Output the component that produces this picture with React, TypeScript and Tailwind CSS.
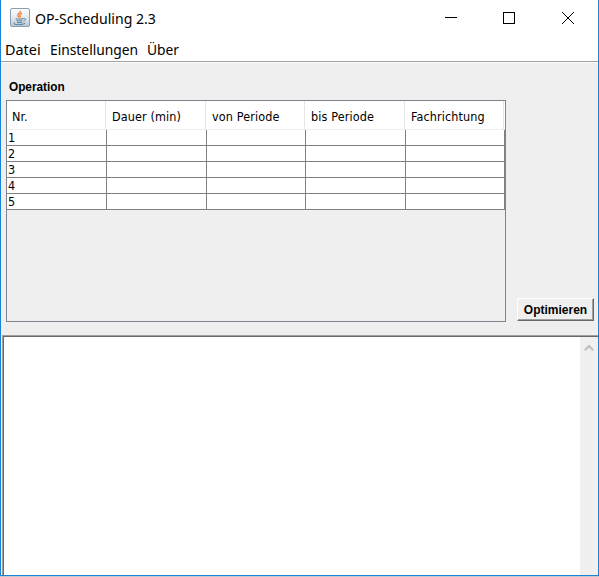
const columns = [
  { label: 'Nr.', head: 'w-[99px]', cell: 'w-[100px]', pad: 'pl-[5px]' },
  { label: 'Dauer (min)', head: 'w-[100px]', cell: 'w-[100px]', pad: 'pl-[6px]' },
  { label: 'von Periode', head: 'w-[99px]', cell: 'w-[99px]', pad: 'pl-[6px]' },
  { label: 'bis Periode', head: 'w-[100px]', cell: 'w-[100px]', pad: 'pl-[6px]' },
  { label: 'Fachrichtung', head: 'w-[99px]', cell: 'w-[99px]', pad: 'pl-[6px]' },
];

function JavaIcon() {
  return (
    <svg width="20" height="20" viewBox="0 0 20 20" fill="none">
      <defs>
        <linearGradient id="tile" x1="0" y1="0" x2="0" y2="1">
          <stop offset="0" stopColor="#fafbfc" />
          <stop offset="0.5" stopColor="#e5eaef" />
          <stop offset="1" stopColor="#b8c5d0" />
        </linearGradient>
      </defs>
      <rect x="0.5" y="0.5" width="19" height="18" rx="1.5" fill="url(#tile)" stroke="#8b9daf" />
      <path d="M10.4 2.8c.8 2-3.2 3-2.6 4.7.2.7 1 1.3 1.5 2M12 5.2c-1.5.7-2.9 1.6-2 2.5.5.7.5 1.3-.2 1.9" stroke="#ed8134" strokeWidth="1.3" />
      <path d="M5.8 10.6c-.6.5 5.3.8 7.6 0M6.5 12.5c1.5.7 4 .7 5.9.1M7 14.3c1.3.5 3.5.5 5 0M13.4 10.6c3-.5 2.6 1.7.1 2.5M4.8 14.8c-3.9 1.7 5.5 2.8 10.2.6" stroke="#4f7c9f" strokeWidth="1" />
    </svg>
  );
}

function TitleBar() {
  return (
    <header className="flex h-9 items-center bg-white pl-[9px]">
      <JavaIcon />
      <h1 className="ml-[5px] h-[22px] w-[121px] origin-left scale-x-[0.94] whitespace-nowrap text-[15px] leading-[22px]">OP-Scheduling 2.3</h1>
      <svg className="ml-auto mr-[23px]" width="130" height="14" fill="none" stroke="black" shapeRendering="crispEdges">
        <path d="M0 6.5h12" />
        <rect x="58.5" y="1.5" width="11" height="11" />
        <path d="M117 1l12 12M129 1l-12 12" shapeRendering="auto" />
      </svg>
    </header>
  );
}

function OperationTable() {
  return (
    <div className="h-[222px] w-[500px] border border-[#7f838d]">
      <div className="flex h-[29px] border-b border-[#eeeeee] bg-white">
        {columns.map((c) => (
          <div key={c.label} className={`${c.head} ${c.pad} shrink-0 border-r border-[#e5e5e5] text-[12.5px] leading-[32px] tracking-[0.12px] whitespace-nowrap`}>{c.label}</div>
        ))}
      </div>
      {[1, 2, 3, 4, 5].map((n) => (
        <div key={n} className="flex h-4 border-b border-[#808080] bg-white">
          {columns.map((c, i) => (
            <div key={c.label} className={`${c.cell} shrink-0 border-r border-[#808080] pl-px text-[12.5px] leading-[15px]`}>{i === 0 ? n : ''}</div>
          ))}
        </div>
      ))}
    </div>
  );
}

export default function App() {
  return (
    <div className="h-[577px] w-[599px] overflow-hidden border-b border-[#c5c8cb] bg-[#efefef] font-['Noto_Sans',sans-serif] text-black">
      <div className="flex h-[576px] flex-col border-x border-b border-[#1883d7]">
        <TitleBar />
        <nav className="flex h-[26px] shrink-0 gap-[9px] border-b border-[#a0a0a0] bg-white pl-1 text-[15px] leading-[27px]">
          <span className="w-9 origin-left scale-x-[0.96]">Datei</span>
          <span className="w-[88px] origin-left scale-x-[0.92]">Einstellungen</span>
          <span className="w-8 origin-left scale-x-[0.92]">Über</span>
        </nav>
        <main className="flex h-[273px] shrink-0 flex-col border-t border-white pl-[5px] pr-1 font-['DejaVu_Sans_Condensed','DejaVu_Sans',sans-serif]">
          <h2 className="h-[37px] origin-left scale-x-[0.985] pl-[3px] pt-[16px] font-['Liberation_Sans',sans-serif] text-[12px] font-bold leading-[16px]">Operation</h2>
          <div className="flex items-end justify-between">
            <OperationTable />
            <button className="mb-px h-[23px] w-[77px] border border-b-[#696969] border-l-white border-r-[#696969] border-t-white font-['Liberation_Sans',sans-serif] text-[12px] font-bold">
              <span className="block h-full whitespace-nowrap border-b border-r border-[#a0a0a0] pl-px leading-[22px]">Optimieren</span>
            </button>
          </div>
        </main>
        <section className="ml-px flex grow border-l border-t border-[#a0a0a0]">
          <div className="flex grow border-l border-t border-[#696969]">
            <div className="grow bg-white" />
            <div className="flex w-[18px] justify-center bg-[#f0f0f0] pt-[7px]">
              <svg width="10" height="8" fill="none" stroke="#bfbfbf" strokeWidth="2"><path d="M.8 6.2L5 2l4.2 4.2" /></svg>
            </div>
          </div>
        </section>
      </div>
    </div>
  );
}
